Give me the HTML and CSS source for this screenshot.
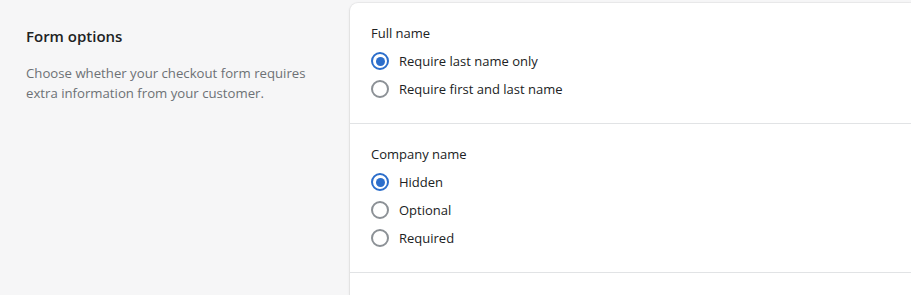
FILE: index.html
```html
<!DOCTYPE html>
<html lang="en">
<head>
  <meta charset="UTF-8">
  <title>Form options</title>
  <link rel="stylesheet" href="styles.css">
</head>
<body>
  <div class="layout">
    <div class="annotation">
      <h2>Form options</h2>
      <p class="description">Choose whether your checkout form requires extra information from your customer.</p>
    </div>

    <div class="card">
      <div class="section">
        <div class="field-label">Full name</div>
        <label class="choice">
          <span class="radio checked"></span>
          <span>Require last name only</span>
        </label>
        <label class="choice">
          <span class="radio"></span>
          <span>Require first and last name</span>
        </label>
      </div>

      <div class="section">
        <div class="field-label">Company name</div>
        <label class="choice">
          <span class="radio checked"></span>
          <span>Hidden</span>
        </label>
        <label class="choice">
          <span class="radio"></span>
          <span>Optional</span>
        </label>
        <label class="choice">
          <span class="radio"></span>
          <span>Required</span>
        </label>
      </div>
    </div>
  </div>
</body>
</html>
```

FILE: styles.css
```css
:root {
  --text: #202223;
  --subdued: #6d7175;
  --blue: #2c6ecb;
  --border: #e1e3e5;
}

body {
  margin: 0;
  background: #f6f6f7;
  font-family: 'Open Sans', sans-serif;
  color: var(--text);
  overflow: hidden;
}

.layout {
  display: flex;
  height: 295px;
}

.annotation {
  width: 350px;
  flex-shrink: 0;
  box-sizing: border-box;
  padding: 26px 30px 0 26px;
}

h2 {
  font-size: 15px;
  font-weight: 600;
  line-height: 20px;
  margin: 0;
}

.description {
  font-size: 13.2px;
  line-height: 20px;
  color: var(--subdued);
  margin: 17px 0 0;
}

.card {
  flex: 1;
  margin-top: 3px;
  background: #fff;
  border-radius: 8px 0 0 0;
  box-shadow: 0 0 0 1px rgba(63, 63, 68, 0.05), 0 1px 3px rgba(63, 63, 68, 0.15);
}

.section {
  padding: 20px 21px;
  border-bottom: 1px solid var(--border);
}

.field-label {
  font-size: 13px;
  line-height: 20px;
  margin-bottom: 4px;
}

.choice {
  display: flex;
  align-items: center;
  gap: 10px;
  height: 28px;
  font-size: 13px;
}

.radio {
  width: 18px;
  height: 18px;
  box-sizing: border-box;
  border: 2px solid #8c9196;
  border-radius: 50%;
  display: flex;
  align-items: center;
  justify-content: center;
}

.radio.checked {
  border-color: var(--blue);
}

.radio.checked::after {
  content: "";
  width: 9px;
  height: 9px;
  border-radius: 50%;
  background: var(--blue);
}
```
